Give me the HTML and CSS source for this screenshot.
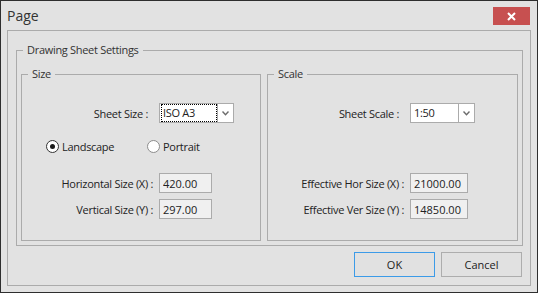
FILE: index.html
```html
<!DOCTYPE html>
<html lang="en">
<head>
    <meta charset="UTF-8">
    <title>Page</title>
    <link rel="stylesheet" href="styles.css">
</head>
<body>
    <div class="dialog">
        <div class="titlebar">
            <span class="title">Page</span>
            <span class="close">
                <svg width="9" height="9" viewBox="0 0 9 9"><path d="M1 1L8 8M8 1L1 8" stroke="#fff" stroke-width="2"/></svg>
            </span>
        </div>
        <div class="panel">
            <fieldset class="group sheet">
                <legend>Drawing Sheet Settings</legend>
                <div class="columns">
                    <fieldset class="group size">
                        <legend>Size</legend>
                        <div class="row combo-row">
                            <label class="field-label">Sheet Size :</label>
                            <div class="combo combo-size">
                                <span class="combo-value focused">ISO A3</span>
                                <span class="combo-btn">
                                    <svg width="7" height="5" viewBox="0 0 7 5"><polyline points="0.5,0.5 3.5,3.8 6.5,0.5" fill="none" stroke="#6b6b6b" stroke-width="1.4"/></svg>
                                </span>
                            </div>
                        </div>
                        <div class="row radio-row">
                            <span class="option"><span class="radio-mark checked"></span>Landscape</span>
                            <span class="option"><span class="radio-mark"></span>Portrait</span>
                        </div>
                        <div class="row field-row">
                            <label class="field-label">Horizontal Size (X) :</label>
                            <input class="text-box" type="text" value="420.00" readonly>
                        </div>
                        <div class="row field-row">
                            <label class="field-label">Vertical Size (Y) :</label>
                            <input class="text-box" type="text" value="297.00" readonly>
                        </div>
                    </fieldset>
                    <fieldset class="group scale">
                        <legend>Scale</legend>
                        <div class="row combo-row">
                            <label class="field-label">Sheet Scale :</label>
                            <div class="combo combo-scale">
                                <span class="combo-value">1:50</span>
                                <span class="combo-btn">
                                    <svg width="7" height="5" viewBox="0 0 7 5"><polyline points="0.5,0.5 3.5,3.8 6.5,0.5" fill="none" stroke="#6b6b6b" stroke-width="1.4"/></svg>
                                </span>
                            </div>
                        </div>
                        <div class="row radio-row"></div>
                        <div class="row field-row">
                            <label class="field-label">Effective Hor Size (X) :</label>
                            <input class="text-box" type="text" value="21000.00" readonly>
                        </div>
                        <div class="row field-row">
                            <label class="field-label">Effective Ver Size (Y) :</label>
                            <input class="text-box" type="text" value="14850.00" readonly>
                        </div>
                    </fieldset>
                </div>
            </fieldset>
            <div class="buttons">
                <button class="btn btn-default">OK</button>
                <button class="btn">Cancel</button>
            </div>
        </div>
    </div>
</body>
</html>
```

FILE: styles.css
```css
body {
    margin: 0;
    font-family: 'Open Sans', sans-serif;
    font-size: 11px;
    letter-spacing: -0.3px;
    color: #222;
}
.dialog {
    width: 538px;
    height: 293px;
    box-sizing: border-box;
    border: 1px solid #2e2e2e;
    background-color: #e2e2e2;
    display: flex;
    flex-direction: column;
}
.titlebar {
    height: 29px;
    flex: none;
    display: flex;
    justify-content: space-between;
    align-items: flex-start;
    padding-left: 6px;
}
.title {
    font-size: 14px;
    line-height: 29px;
    letter-spacing: 0;
    color: #333;
}
.close {
    width: 37px;
    height: 18px;
    margin-top: 6px;
    margin-right: 7px;
    background-color: #c75050;
    display: flex;
    justify-content: center;
    align-items: center;
}
.panel {
    flex: 1;
    margin: 0 6px 6px;
    border: 1px solid #ababab;
    padding: 12px 7px 8px 8px;
    display: flex;
    flex-direction: column;
}
.group {
    margin: 0;
    padding: 0;
    min-width: 0;
    border: 1px solid #ababab;
}
.group legend {
    margin-left: 6px;
    padding: 0 4px;
    line-height: 14px;
    color: #333;
}
.columns {
    display: grid;
    grid-template-columns: 240px 251px;
    column-gap: 6px;
    padding: 10px 4px 4px;
}
.size, .scale {
    height: 174px;
    box-sizing: border-box;
}
.row {
    display: flex;
    align-items: center;
    height: 20px;
}
.combo-row {
    margin-top: 22px;
}
.radio-row {
    margin-top: 13px;
    padding-left: 24px;
}
.field-row {
    margin-top: 17px;
}
.field-row + .field-row {
    margin-top: 6px;
}
.field-label {
    flex: none;
    text-align: right;
    white-space: nowrap;
    margin-right: 6px;
    box-sizing: border-box;
}
.size .field-label {
    width: 131px;
}
.scale .field-label {
    width: 136px;
}
.combo-row .field-label {
    padding-right: 5px;
}
.combo {
    display: flex;
    height: 20px;
    box-sizing: border-box;
    border: 1px solid #ababab;
    background-color: #fff;
}
.combo-size {
    width: 75px;
}
.combo-scale {
    width: 65px;
}
.combo-value {
    flex: 1;
    padding-left: 3px;
    line-height: 18px;
}
.combo-value.focused {
    margin-left: 1px;
    padding-left: 1px;
    border: 1px dotted #000;
    line-height: 16px;
}
.combo-btn {
    width: 16px;
    box-sizing: border-box;
    border-left: 1px solid #ababab;
    display: flex;
    justify-content: center;
    align-items: center;
}
.option {
    display: flex;
    align-items: center;
    gap: 3px;
}
.option:first-child {
    width: 101px;
}
.radio-mark {
    position: relative;
    width: 13px;
    height: 13px;
    box-sizing: border-box;
    border: 1px solid #8c8c8c;
    border-radius: 50%;
    background-color: #fff;
}
.radio-mark.checked {
    border-color: #333;
}
.radio-mark.checked::after {
    content: '';
    position: absolute;
    left: 3px;
    top: 3px;
    width: 5px;
    height: 5px;
    border-radius: 50%;
    background-color: #1a1a1a;
}
.text-box {
    height: 20px;
    box-sizing: border-box;
    border: 1px solid #ababab;
    background-color: #f0f0f0;
    padding: 0 0 0 3px;
    font: inherit;
    color: #222;
    outline: none;
}
.size .text-box {
    width: 53px;
}
.scale .text-box {
    width: 58px;
}
.buttons {
    display: flex;
    justify-content: flex-end;
    gap: 6px;
    margin-top: 6px;
    padding-right: 1px;
}
.btn {
    width: 81px;
    height: 25px;
    padding: 0;
    border: 1px solid #adadad;
    background-color: #e1e1e1;
    font: inherit;
    color: #222;
}
.btn-default {
    border-color: #3c9be8;
}
```
